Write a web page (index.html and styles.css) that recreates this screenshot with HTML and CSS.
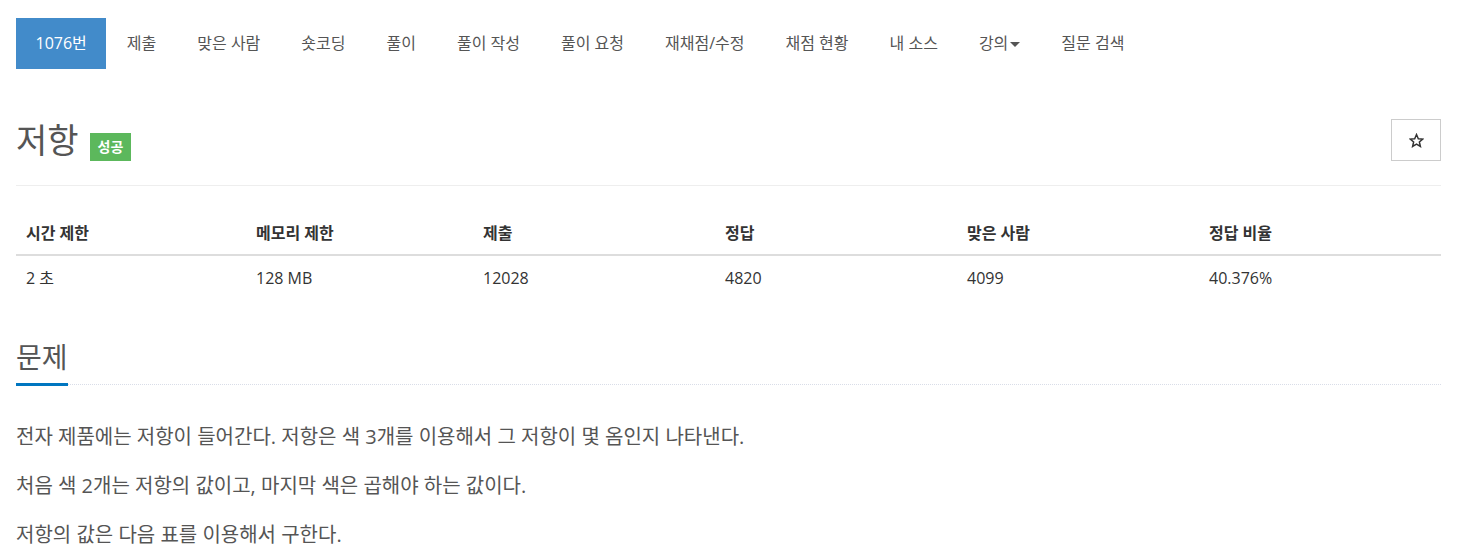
FILE: index.html
```html
<!DOCTYPE html>
<html lang="ko">
<head>
<meta charset="utf-8">
<title>1076번: 저항</title>
<link rel="stylesheet" href="styles.css">
</head>
<body>
<div class="wrap">
  <ul class="nav">
    <li class="tab active">1076번</li>
    <li class="tab">제출</li>
    <li class="tab">맞은 사람</li>
    <li class="tab">숏코딩</li>
    <li class="tab">풀이</li>
    <li class="tab">풀이 작성</li>
    <li class="tab">풀이 요청</li>
    <li class="tab">재채점/수정</li>
    <li class="tab">채점 현황</li>
    <li class="tab">내 소스</li>
    <li class="tab">강의<span class="caret"></span></li>
    <li class="tab">질문 검색</li>
  </ul>

  <div class="page-header">
    <div class="title-group">
      <span class="title">저항</span>
      <span class="badge">성공</span>
    </div>
    <button class="star-btn" type="button" aria-label="star">
      <svg width="15" height="15" viewBox="0 0 24 24"><path d="M12 2.5l2.9 6.6 7.1.6-5.4 4.7 1.6 7-6.2-3.7-6.2 3.7 1.6-7L2 9.7l7.1-.6z" fill="none" stroke="#333" stroke-width="2.4" stroke-linejoin="miter"/></svg>
    </button>
  </div>

  <table class="info">
    <thead>
      <tr>
        <th class="c1">시간 제한</th>
        <th class="c2">메모리 제한</th>
        <th class="c3">제출</th>
        <th class="c4">정답</th>
        <th class="c5">맞은 사람</th>
        <th class="c6">정답 비율</th>
      </tr>
    </thead>
    <tbody>
      <tr>
        <td>2 초</td>
        <td>128 MB</td>
        <td>12028</td>
        <td>4820</td>
        <td>4099</td>
        <td>40.376%</td>
      </tr>
    </tbody>
  </table>

  <section class="problem">
    <div class="headline"><h2>문제</h2></div>
    <div class="desc">
      <p>전자 제품에는 저항이 들어간다. 저항은 색 3개를 이용해서 그 저항이 몇 옴인지 나타낸다.</p>
      <p>처음 색 2개는 저항의 값이고, 마지막 색은 곱해야 하는 값이다.</p>
      <p>저항의 값은 다음 표를 이용해서 구한다.</p>
    </div>
  </section>
</div>
</body>
</html>
```

FILE: styles.css
```css
html, body {
  margin: 0;
  padding: 0;
  background: #fff;
}
body {
  font-family: "Open Sans", "Noto Sans CJK KR", sans-serif;
  font-size: 16px;
  color: #333;
}
.wrap {
  width: 1425px;
  margin-left: 16px;
}
.nav {
  list-style: none;
  margin: 18px 0 0 0;
  padding: 0;
  display: flex;
}
.tab {
  padding: 15px 20.5px;
  line-height: 21px;
  color: #555;
  font-size: 16px;
  white-space: nowrap;
}
.tab.active {
  background: #428bca;
  color: #fff;
  padding: 15px 19.5px;
}
.caret {
  display: inline-block;
  width: 0;
  height: 0;
  margin-left: 2px;
  vertical-align: middle;
  border-top: 5px solid #555;
  border-left: 5px solid transparent;
  border-right: 5px solid transparent;
}
.page-header {
  margin-top: 50px;
  display: flex;
  justify-content: space-between;
  align-items: center;
  padding-bottom: 24px;
  border-bottom: 1px solid #eee;
}
.title-group {
  display: flex;
  align-items: center;
}
.title {
  font-size: 34px;
  line-height: 38px;
  color: #555;
}
.badge {
  margin-left: 11px;
  margin-top: 14px;
  background: #5cb85c;
  color: #fff;
  font-size: 14px;
  font-weight: bold;
  line-height: 28px;
  height: 28px;
  padding: 0 8px;
}
.star-btn {
  width: 50px;
  height: 42px;
  border: 1px solid #ccc;
  background: #fff;
  display: flex;
  align-items: center;
  justify-content: center;
  padding: 0;
  margin: 0;
}
.info {
  margin-top: 26px;
  width: 1425px;
  border-collapse: collapse;
  table-layout: fixed;
}
.info th, .info td {
  box-sizing: border-box;
  text-align: left;
  padding: 11px 10px;
  line-height: 22px;
  font-size: 16px;
  color: #333;
}
.info th {
  font-weight: bold;
  padding: 10px 10px;
  border-bottom: 2px solid #ddd;
}
.c1 { width: 230px; }
.c2 { width: 227px; }
.c3 { width: 242px; }
.c4 { width: 242px; }
.c5 { width: 242px; }
.c6 { width: 242px; }
.problem {
  margin-top: 37px;
}
.headline {
  border-bottom: 1px dotted #d9dde8;
  height: 47px;
}
.headline h2 {
  display: inline-block;
  margin: 0;
  font-size: 28px;
  line-height: 40px;
  font-weight: normal;
  color: #555;
  padding-bottom: 6px;
  border-bottom: 3px solid #0076c0;
}
.desc {
  margin-top: 37px;
}
.desc p {
  margin: 0 0 19px 0;
  font-size: 20px;
  line-height: 30px;
  color: #555;
}
```
